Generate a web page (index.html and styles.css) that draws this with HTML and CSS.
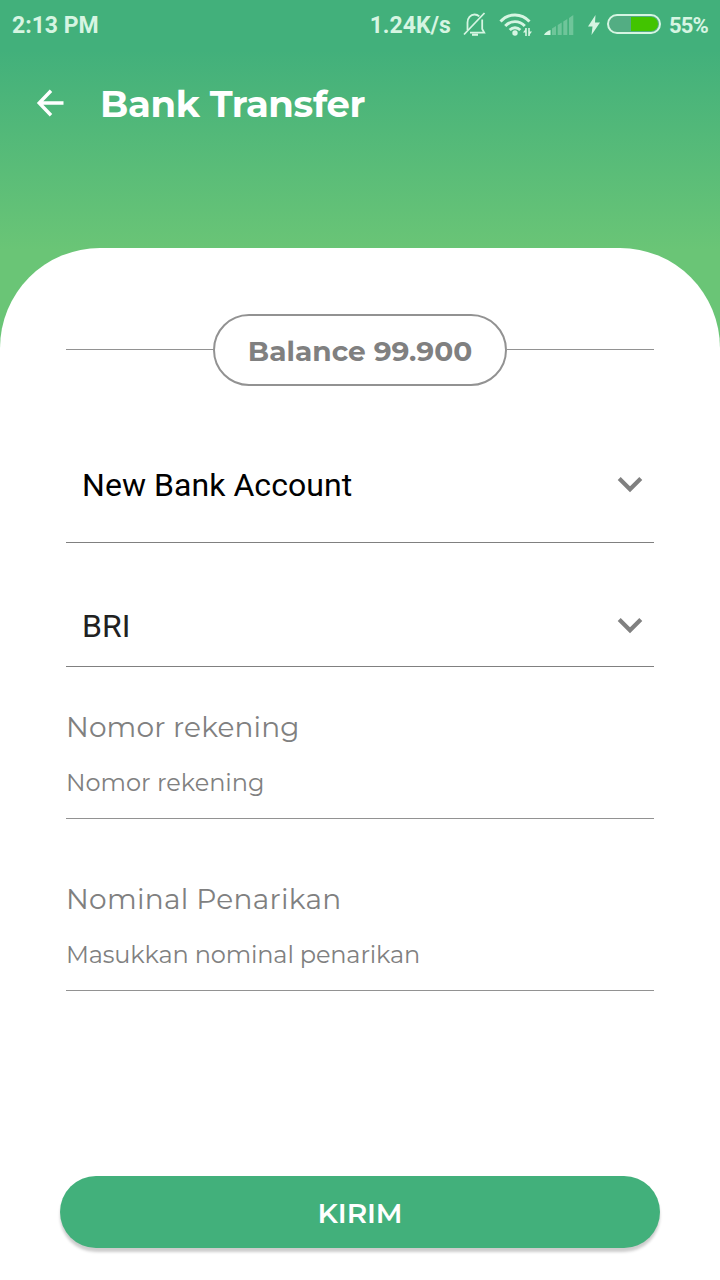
FILE: index.html
```html
<!DOCTYPE html>
<html lang="id">
  <head>
    <meta charset="utf-8">
    <meta name="viewport" content="width=device-width">
    <title>Bank Transfer</title>
    <link rel="stylesheet" href="styles.css">
  </head>

<body>
  <div class="screen">
    <!-- Status bar -->
    <div class="status-bar">
      <span class="time">2:13 PM</span>
      <span class="speed">1.24K/s</span>
      <svg class="icon-mute" width="24" height="26" viewBox="0 0 24 26" fill="none" stroke="currentColor" stroke-width="1.8">
        <path d="M4.500 18V10.500C4.500 6 7.500 2.500 11.500 2.500c2 0 3.500.6 4.800 1.800M19.200 7.500V17l2 3.600H7"/>
        <path d="M1 22.500L21.500 1"/>
        <path d="M9 22.700h6" stroke-width="2.200"/>
      </svg>
      <svg class="icon-wifi" width="34" height="26" viewBox="0 0 34 26" fill="none" stroke="currentColor" stroke-width="2.900">
        <path d="M1.500 9.500C9.500 .8 22.500 .8 30.500 9.500"/>
        <path d="M6.200 14C11.600 8.200 20.400 8.200 25.800 14"/>
        <path d="M10.700 18c3-3 7.600-3 10.600 0"/>
        <circle cx="16" cy="21" r="2.700" fill="currentColor" stroke="none"/>
        <path d="M27 16v8M30 16v8" stroke-width="1.600"/>
        <path d="M24 20.500l3-4v4zM33 19.500l-3 4v-4z" fill="currentColor" stroke="none"/>
      </svg>
      <svg class="icon-signal" width="32" height="22" viewBox="0 0 32 22" fill="currentColor">
        <path d="M1 21c1-2.500 3.500-4 6.500-5v5z"/>
        <path opacity=".3" d="M9 14.500l4-2.500v9H9zM14.700 11l4-2.500V21h-4zM20.300 7.500l4-2.500v16h-4zM26 4l4.300-3v20H26z"/>
      </svg>
      <svg class="icon-bolt" width="14" height="20" viewBox="0 0 14 20" fill="currentColor">
        <path d="M8.500 0L1 11.500h4.500L4.500 20 13 7.500H8z"/>
      </svg>
      <span class="battery"><span class="battery-level"></span></span>
      <span class="percent">55%</span>
    </div>

    <header class="header">
      <svg width="28" height="28" viewBox="0 0 28 28" fill="none" stroke="currentColor" stroke-width="3.400">
        <path d="M15 1.800L3.200 14 15 26.200M3.200 14H27.500"/>
      </svg>
      <h1>Bank Transfer</h1>
    </header>

    <main class="card">
      <div class="balance-row">
        <span class="balance">Balance 99.900</span>
      </div>

      <form class="form">
        <div class="select account">
          <select id="account" aria-label="Account">
            <option>New Bank Account</option>
          </select>
          <svg width="26" height="17" viewBox="0 0 26 17" fill="none" stroke="currentColor" stroke-width="4.200">
            <path d="M2.200 2.500L13 13.300 23.800 2.500"/>
          </svg>
        </div>

        <div class="select bank">
          <select id="bank" aria-label="Bank">
            <option>BRI</option>
          </select>
          <svg width="26" height="17" viewBox="0 0 26 17" fill="none" stroke="currentColor" stroke-width="4.200">
            <path d="M2.200 2.500L13 13.300 23.800 2.500"/>
          </svg>
        </div>

        <div class="field">
          <label class="label-number" for="number">Nomor rekening</label>
          <input class="input-number" id="number" type="text" placeholder="Nomor rekening">
        </div>

        <div class="field">
          <label class="label-nominal" for="nominal">Nominal Penarikan</label>
          <input class="input-nominal" id="nominal" type="text" placeholder="Masukkan nominal penarikan">
        </div>

        <button class="submit" type="button">KIRIM</button>
      </form>
    </main>
  </div>
</body>

</html>
```
FILE: styles.css
```css
* {
  box-sizing: border-box;
}

body {
  margin: 0;
  font-family: "Montserrat", "Inter", sans-serif;
  color: #808080;
}

.screen {
  display: flex;
  flex-direction: column;
  width: 720px;
  height: 1280px;
  overflow: hidden;
  background: linear-gradient(#42b07b 50px, #6ac576 250px);
}

/* Status bar */
.status-bar {
  display: flex;
  align-items: center;
  height: 50px;
  padding: 0 12px;
  font-family: Roboto, sans-serif;
  font-size: 23px;
  font-weight: 700;
  color: #d6f5e2;
}

.speed {
  margin-left: auto;
}

.percent {
  font-size: 22px;
  letter-spacing: -0.8px;
}

.status-bar svg {
  flex: none;
}

.icon-mute {
  margin-left: 12px;
}

.icon-wifi {
  margin-left: 12px;
}

.icon-signal {
  margin-left: 10px;
}

.icon-bolt {
  margin-left: 12px;
}

.battery {
  width: 54px;
  height: 20px;
  margin: -2px 8px 0 6px;
  padding: 1px;
  border: 2px solid #d6f5e2;
  border-radius: 10px;
  background: #53ad83;
}

.battery-level {
  display: block;
  width: 27px;
  height: 14px;
  margin-left: auto;
  border-radius: 0 7px 7px 0;
  background: #42c400;
}

/* Header */
.header {
  display: flex;
  align-items: center;
  height: 106px;
  margin-bottom: 92px;
  padding-left: 36px;
  color: #fff;
}

.header h1 {
  margin: 0 0 0 36px;
  font-size: 37px;
  font-weight: 700;
  letter-spacing: -0.35px;
}

/* Card */
.card {
  flex: 1;
  padding: 66px 66px 0;
  border-radius: 100px 100px 0 0;
  background: #fff;
}

.balance-row {
  display: flex;
  align-items: center;
}

.balance-row::before,
.balance-row::after {
  content: "";
  flex: 1;
  height: 1px;
  margin-top: -1px;
  background: #929292;
}

.balance {
  width: 294px;
  height: 72px;
  padding-top: 1px;
  border: 2px solid #929292;
  border-radius: 36px;
  font-size: 28px;
  font-weight: 700;
  line-height: 68px;
  text-align: center;
  white-space: nowrap;
}

/* Form */
.select {
  display: flex;
  align-items: center;
  padding: 0 11px 0 16px;
  border-bottom: 1px solid #808080;
}

.select select {
  flex: 1;
  height: 60px;
  padding: 0;
  border: 0;
  appearance: none;
  background: none;
  font: 400 32px Roboto, sans-serif;
  letter-spacing: 0.05px;
  color: #000;
}

.account {
  height: 116px;
  margin-top: 41px;
}

.bank {
  height: 82px;
  margin-top: 42px;
}

.bank select {
  color: #212121;
}

.field {
  height: 152px;
  border-bottom: 1px solid #929292;
}

.field + .field {
  margin-top: 20px;
}

.field label {
  display: block;
  padding-top: 40px;
  font-size: 28px;
  line-height: 40px;
}

.field input {
  display: block;
  width: 100%;
  height: 34px;
  margin-top: 18px;
  padding: 0;
  border: 0;
  outline: none;
  background: none;
  font-family: inherit;
  font-size: 24px;
}

.field input::placeholder {
  color: #808080;
}

.label-number {
  letter-spacing: 0.15px;
}

.label-nominal {
  letter-spacing: 0.3px;
}

.field .input-nominal {
  letter-spacing: -0.15px;
}

.submit {
  display: block;
  width: 600px;
  height: 72px;
  margin: 185px 0 0 -6px;
  padding: 1px 0 0;
  border: 0;
  border-radius: 36px;
  background: #42b07b;
  box-shadow: 0 4px 3px rgba(0, 0, 0, 0.2);
  font-family: inherit;
  font-size: 28px;
  font-weight: 600;
  letter-spacing: -0.1px;
  color: #fff;
}
```
